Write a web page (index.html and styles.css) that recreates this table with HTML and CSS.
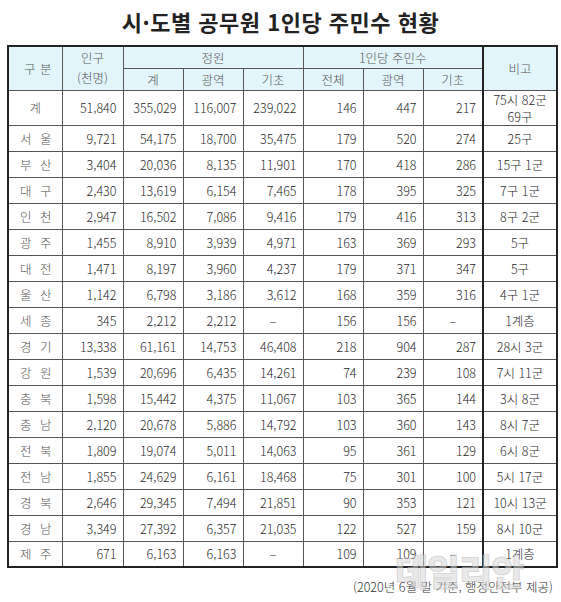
FILE: index.html
```html
<!DOCTYPE html>
<html lang="ko">
<head>
<meta charset="utf-8">
<title>시·도별 공무원 1인당 주민수 현황</title>
<link rel="stylesheet" href="styles.css">
</head>
<body>
<div class="page">
  <h1 class="title">시·도별 공무원 1인당 주민수 현황</h1>
  <div class="table-wrap">
    <table class="stats">
      <colgroup>
        <col class="c-region"><col class="c-pop"><col class="c-n"><col class="c-n"><col class="c-n"><col class="c-n"><col class="c-n"><col class="c-n"><col class="c-note">
      </colgroup>
      <thead>
        <tr class="h1">
          <th rowspan="2" class="region"><span class="sp"><span>구</span><span>분</span></span></th>
          <th rowspan="2" class="pop-h">인구<br>(천명)</th>
          <th colspan="3">정원</th>
          <th colspan="3">1인당 주민수</th>
          <th rowspan="2" class="note">비고</th>
        </tr>
        <tr class="h2">
          <th>계</th><th>광역</th><th>기초</th>
          <th>전체</th><th>광역</th><th>기초</th>
        </tr>
      </thead>
      <tbody>
        <tr class="total">
          <td class="region center">계</td>
          <td>51,840</td><td>355,029</td><td>116,007</td><td>239,022</td>
          <td>146</td><td>447</td><td>217</td>
          <td class="note">75시 82군<br>69구</td>
        </tr>
        <tr><td class="region"><span class="sp"><span>서</span><span>울</span></span></td><td>9,721</td><td>54,175</td><td>18,700</td><td>35,475</td><td>179</td><td>520</td><td>274</td><td class="note">25구</td></tr>
        <tr><td class="region"><span class="sp"><span>부</span><span>산</span></span></td><td>3,404</td><td>20,036</td><td>8,135</td><td>11,901</td><td>170</td><td>418</td><td>286</td><td class="note">15구 1군</td></tr>
        <tr><td class="region"><span class="sp"><span>대</span><span>구</span></span></td><td>2,430</td><td>13,619</td><td>6,154</td><td>7,465</td><td>178</td><td>395</td><td>325</td><td class="note">7구 1군</td></tr>
        <tr><td class="region"><span class="sp"><span>인</span><span>천</span></span></td><td>2,947</td><td>16,502</td><td>7,086</td><td>9,416</td><td>179</td><td>416</td><td>313</td><td class="note">8구 2군</td></tr>
        <tr><td class="region"><span class="sp"><span>광</span><span>주</span></span></td><td>1,455</td><td>8,910</td><td>3,939</td><td>4,971</td><td>163</td><td>369</td><td>293</td><td class="note">5구</td></tr>
        <tr><td class="region"><span class="sp"><span>대</span><span>전</span></span></td><td>1,471</td><td>8,197</td><td>3,960</td><td>4,237</td><td>179</td><td>371</td><td>347</td><td class="note">5구</td></tr>
        <tr><td class="region"><span class="sp"><span>울</span><span>산</span></span></td><td>1,142</td><td>6,798</td><td>3,186</td><td>3,612</td><td>168</td><td>359</td><td>316</td><td class="note">4구 1군</td></tr>
        <tr><td class="region"><span class="sp"><span>세</span><span>종</span></span></td><td>345</td><td>2,212</td><td>2,212</td><td class="dash">–</td><td>156</td><td>156</td><td class="dash">–</td><td class="note">1계층</td></tr>
        <tr><td class="region"><span class="sp"><span>경</span><span>기</span></span></td><td>13,338</td><td>61,161</td><td>14,753</td><td>46,408</td><td>218</td><td>904</td><td>287</td><td class="note">28시 3군</td></tr>
        <tr><td class="region"><span class="sp"><span>강</span><span>원</span></span></td><td>1,539</td><td>20,696</td><td>6,435</td><td>14,261</td><td>74</td><td>239</td><td>108</td><td class="note">7시 11군</td></tr>
        <tr><td class="region"><span class="sp"><span>충</span><span>북</span></span></td><td>1,598</td><td>15,442</td><td>4,375</td><td>11,067</td><td>103</td><td>365</td><td>144</td><td class="note">3시 8군</td></tr>
        <tr><td class="region"><span class="sp"><span>충</span><span>남</span></span></td><td>2,120</td><td>20,678</td><td>5,886</td><td>14,792</td><td>103</td><td>360</td><td>143</td><td class="note">8시 7군</td></tr>
        <tr><td class="region"><span class="sp"><span>전</span><span>북</span></span></td><td>1,809</td><td>19,074</td><td>5,011</td><td>14,063</td><td>95</td><td>361</td><td>129</td><td class="note">6시 8군</td></tr>
        <tr><td class="region"><span class="sp"><span>전</span><span>남</span></span></td><td>1,855</td><td>24,629</td><td>6,161</td><td>18,468</td><td>75</td><td>301</td><td>100</td><td class="note">5시 17군</td></tr>
        <tr><td class="region"><span class="sp"><span>경</span><span>북</span></span></td><td>2,646</td><td>29,345</td><td>7,494</td><td>21,851</td><td>90</td><td>353</td><td>121</td><td class="note">10시 13군</td></tr>
        <tr><td class="region"><span class="sp"><span>경</span><span>남</span></span></td><td>3,349</td><td>27,392</td><td>6,357</td><td>21,035</td><td>122</td><td>527</td><td>159</td><td class="note">8시 10군</td></tr>
        <tr><td class="region"><span class="sp"><span>제</span><span>주</span></span></td><td>671</td><td>6,163</td><td>6,163</td><td class="dash">–</td><td>109</td><td>109</td><td class="dash">–</td><td class="note">1계층</td></tr>
      </tbody>
    </table>
    <div class="watermark">데일리안</div>
  </div>
  <p class="source">(2020년 6월 말 기준, 행정안전부 제공)</p>
</div>
</body>
</html>
```
FILE: styles.css
```css
html, body {
  margin: 0;
  padding: 0;
  background: #ffffff;
}
body {
  font-family: "Noto Sans CJK KR", "Noto Sans", sans-serif;
  color: #333;
}
.page {
  width: 561px;
  height: 602px;
  overflow: hidden;
}
.title {
  margin: 0;
  height: 45px;
  line-height: 42px;
  text-align: center;
  font-size: 22px;
  font-weight: 700;
  color: #222;
  letter-spacing: 0.5px;
}
.table-wrap {
  position: relative;
  margin-left: 7px;
  width: 550px;
}
.stats {
  border-collapse: collapse;
  width: 550px;
  table-layout: fixed;
  border: 2px solid #222;
  font-size: 12.5px;
  font-weight: 300;
}
.c-region { width: 54px; }
.c-pop { width: 61px; }
.c-n { width: 60px; }
.c-note { width: 74px; }
.stats th,
.stats td {
  border: 1px solid #555;
  padding: 0 6px 0 4px;
  line-height: 15px;
  white-space: nowrap;
}
.stats th {
  background: #e2f5fb;
  font-weight: 300;
  color: #555;
  text-align: center;
  padding: 0;
}
.stats .h1 { height: 22px; }
.stats .h2 { height: 22px; }
.stats .pop-h { line-height: 20px; }
.stats td {
  text-align: right;
  color: #2a2a2a;
}
.stats tbody tr { height: 26px; }
.stats tbody tr.total { height: 33px; }
.stats .total td { line-height: 17px; }
.stats td.region,
.stats th.region {
  text-align: left;
  padding: 0 10px 0 11px;
  color: #555;
}
.stats th.region { padding: 0 10px 0 15px; }
.stats td.center { text-align: center; padding: 0; }
.sp {
  display: flex;
  justify-content: space-between;
}
.stats td.note,
.stats th.note {
  text-align: center;
  border-left: 2px solid #222;
  padding: 0;
}
.stats td.dash {
  text-align: center;
  padding: 0;
}
.watermark {
  position: absolute;
  left: 388px;
  top: 507px;
  font-size: 36px;
  line-height: 36px;
  font-weight: 900;
  letter-spacing: -1px;
  color: rgba(215, 215, 215, 0.55);
  -webkit-text-stroke: 1px rgba(150, 150, 150, 0.3);
  pointer-events: none;
}
.source {
  margin: 9px 8px 0 0;
  text-align: right;
  font-size: 12.5px;
  font-weight: 300;
  color: #333;
}
```
